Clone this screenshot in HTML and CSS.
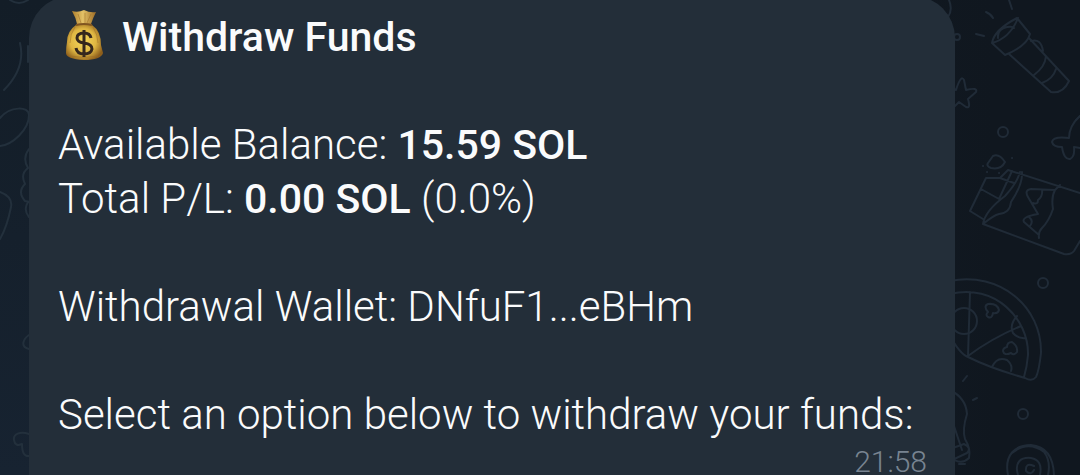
FILE: index.html
```
<!DOCTYPE html>
<html lang="en">
<head>
<meta charset="utf-8">
<meta name="viewport" content="width=device-width, initial-scale=1">
<title>Withdraw Funds</title>
<link rel="stylesheet" href="styles.css">
</head>
<body>
<main class="chat">
  <svg class="doodles doodles-left" width="60" height="475" viewBox="0 0 60 475" aria-hidden="true">
    <path d="M10 0Q19 6 28 0M20 43Q26 68 4 90M28 46V62M0 118C10 106 29 106 29 115C29 130 12 145 0 146M29 149Q22 158 28 168Q20 174 25 184Q17 192 25 201Q31 202 28 202Q23 210 29 217M0 192Q13 197 11 207Q7 227 0 239M29 335C23 339 20 347 29 349M29 434C20 431 13 434 14 440Q15 447 22 444Q22 457 29 456"/>
  </svg>
  <svg class="doodles doodles-right" width="140" height="475" viewBox="940 0 140 475" aria-hidden="true">
    <path d="M949 0Q953 10 948 17M1009 0L1012 9M986 12Q991 14 993 18M976 34L984 36"/>
    <circle cx="957" cy="37" r="3"/>
    <path d="M992 43Q994 30 1017 18L1030 34Q1027 46 1005 55Z M992 43Q1010 38 1018 18M998 38Q997 29 1007 27Q1013 26 1014 28M1009 54L1051 92Q1063 94 1069 81L1029 38M1046 56Q1045 67 1034 75M1056 69Q1053 79 1042 83M1031 41Q1041 38 1043 51"/>
    <path d="M950 88L956 90Q961 74 964 80L966 90Q978 87 976 92L968 99Q971 109 966 107L959 102L950 111M1076 120L1080 116"/>
    <circle cx="1003" cy="132" r="5"/>
    <path d="M1080 116Q1069 126 1069 138Q1053 136 1052 142Q1053 147 1062 147Q1064 160 1070 159Q1075 157 1074 147L1080 148M988 163L993 156Q999 153 1005 162Q1001 170 991 168Q986 166 988 163Z"/>
    <path d="M983 219L970 211L986 178L1000 178L1008 170L1080 193M1000 178L1014 183M981 189L999 199L1012 171M1020 172Q1017 183 1005 196Q985 211 983 224L1064 254Q1071 255 1074 251L1080 241M1022 172Q1023 184 1011 202Q1010 213 999 214Q994 215 983 224M1060 185L1055 190L1031 189Q1024 190 1028 197L1038 214Q1021 217 1024 222L1039 235M1055 190Q1051 197 1053 209Q1049 221 1042 228Q1038 232 1039 238M1042 190Q1043 196 1038 200Q1038 205 1033 203M1029 217Q1034 221 1030 226"/>
    <path d="M983 166h.1M987 172h.1M999 173h.1M1012 158h.1"/>
    <circle cx="1043" cy="283" r="5"/>
    <path d="M950 281C1000 271 1042 307 1041 353Q1039 371 1036 377Q1032 382 1025 378Q990 368 968 357Q960 354 950 336M950 294C995 283 1029 319 1028 355Q1027 367 1024 377M970 292L968 356Q992 338 1021 326M1017 316Q1009 325 1013 333Q1018 339 1026 338M992 367Q997 356 1007 360Q1013 365 1011 371"/>
    <circle cx="964" cy="321" r="13"/>
    <path d="M988 312Q983 306 988 304Q997 303 999 310Q998 314 993 313Q992 319 988 317Q985 315 988 312ZM1007 347Q1007 342 1012 342Q1018 346 1017 352Q1014 356 1011 353Q1004 356 1003 351Q1003 348 1007 347ZM963 381L967 376M973 400L977 398"/>
    <path d="M950 390Q966 398 967 414Q962 430 965 439Q971 449 969 458Q961 466 950 457M953 423L962 450M950 449L964 444Q972 448 967 453L950 461M959 464H965"/>
    <circle cx="1023" cy="414" r="5"/>
    <path d="M1008 475C1004 455 1015 445 1031 445Q1053 447 1054 475M1012 453Q1028 440 1044 452Q1051 461 1048 475M1018 475C1014 462 1021 457 1031 458Q1043 460 1040 475M1034 466Q1025 462 1026 471Q1031 476 1034 470"/>
  </svg>

  <article class="bubble">
    <h1 class="title">
      <svg class="money" width="54" height="54" viewBox="0 0 54 54" role="img" aria-label="Money bag">
        <defs>
          <radialGradient id="bag" cx=".46" cy=".48" r=".58">
            <stop offset="0" stop-color="#f5d75b"/><stop offset=".6" stop-color="#dfb642"/><stop offset="1" stop-color="#8d5e1b"/>
          </radialGradient>
          <linearGradient id="neck" x2="1">
            <stop offset="0" stop-color="#ad7d2b"/><stop offset=".45" stop-color="#e4c267"/><stop offset="1" stop-color="#9c6b25"/>
          </linearGradient>
        </defs>
        <path fill="url(#neck)" d="M14 1Q20 3 26 0Q32 3 38 2Q35 8 33 14H19Q18 8 14 1Z"/>
        <path fill="url(#bag)" d="M18 15Q26 13 34 15Q43 21 43 35L45 43Q43 50 26 50Q8 49 8 43Q8 37 9 32Q9 21 18 15Z"/>
        <path class="fold" d="M20 4L23 13M27 3V13M33 4L29 13M17 17Q12 24 12 33M35 17Q40 25 40 33M12 46Q26 49 40 46"/>
        <path class="tie" d="M18 15Q26 13 34 15"/>
        <path class="dollar" d="M33 28Q32 23 26 23Q19 23 19 28Q19 32 26 33Q34 34 34 39Q33 44 26 44Q19 44 18 38M26 20V47"/>
      </svg>
      <span>Withdraw Funds</span>
    </h1>
    <p class="paragraph">Available Balance: <strong>15.59 SOL</strong><br>Total P/L: <strong>0.00 SOL</strong> (0.0%)</p>
    <p class="paragraph">Withdrawal Wallet: DNfuF1...eBHm</p>
    <p class="paragraph">Select an option below to withdraw your funds:</p>
    <time class="time" datetime="21:58">21:58</time>
  </article>
</main>
</body>
</html>
```
FILE: styles.css
```
* {
  box-sizing: border-box;
}

body {
  margin: 0;
  background: #131b26;
}

.chat {
  position: relative;
  display: flow-root;
  height: 100vh;
  overflow: hidden;
  padding: 0 125px 0 29px;
  background: linear-gradient(to right, #00000000 50%, #10171f 92%), linear-gradient(#131d27, #172331);
}

.doodles {
  position: absolute;
  top: 0;
  fill: none;
  stroke: #202b37;
  stroke-width: 2;
  stroke-linecap: round;
  stroke-linejoin: round;
}

.doodles-left {
  left: 0;
  stroke: #23303c;
}

.doodles-right {
  right: 0;
}

.bubble {
  position: relative;
  display: flex;
  flex-direction: column;
  gap: 54px;
  margin-top: -4px;
  padding: 14px 28px 20px 29px;
  border-radius: 42px 42px 12px 0;
  background: #232e39;
  color: #fafbfc;
  font-family: Roboto, "Liberation Sans", sans-serif;
  font-size: 42px;
  font-weight: 300;
  line-height: 54px;
}

.title {
  display: flex;
  gap: 10px;
  margin: 0;
  font-size: 41px;
  font-weight: 500;
}

.money {
  flex: none;
}

.fold {
  fill: none;
  stroke: #9b6c25;
  stroke-opacity: .5;
}

.tie {
  fill: none;
  stroke: #805520;
  stroke-width: 2;
}

.dollar {
  fill: none;
  stroke: #35271d;
  stroke-width: 3;
}

.paragraph {
  margin: 0;
}

.paragraph strong {
  font-size: 41px;
  font-weight: 500;
  line-height: 1;
}

.time {
  align-self: flex-end;
  margin-top: -56px;
  color: #788491;
  font-size: 30px;
  line-height: 44px;
}
```
